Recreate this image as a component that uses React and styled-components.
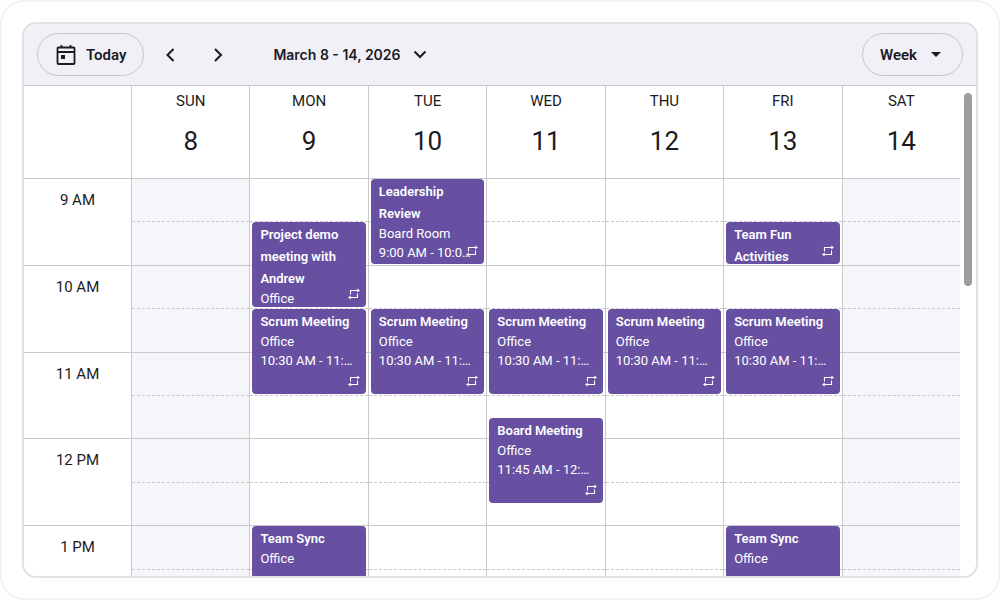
import styled, { createGlobalStyle } from "styled-components";

const days = [
    { name: "SUN", date: 8, off: true, events: [] },
    {
        name: "MON", date: 9, events: [
            { title: "Project demo meeting with Andrew", place: "Office", start: 3 },
            { title: "Scrum Meeting", place: "Office", time: "10:30 AM - 11:30 AM", start: 7 },
            { title: "Team Sync", place: "Office", start: 17 },
        ]
    },
    {
        name: "TUE", date: 10, events: [
            { title: "Leadership Review", place: "Board Room", time: "9:00 AM - 10:00 AM", start: 1 },
            { title: "Scrum Meeting", place: "Office", time: "10:30 AM - 11:30 AM", start: 7 },
        ]
    },
    {
        name: "WED", date: 11, events: [
            { title: "Scrum Meeting", place: "Office", time: "10:30 AM - 11:30 AM", start: 7 },
            { title: "Board Meeting", place: "Office", time: "11:45 AM - 12:45 PM", start: 12 },
        ]
    },
    {
        name: "THU", date: 12, events: [
            { title: "Scrum Meeting", place: "Office", time: "10:30 AM - 11:30 AM", start: 7 },
        ]
    },
    {
        name: "FRI", date: 13, events: [
            { title: "Team Fun Activities", start: 3, length: 2 },
            { title: "Scrum Meeting", place: "Office", time: "10:30 AM - 11:30 AM", start: 7 },
            { title: "Team Sync", place: "Office", start: 17 },
        ]
    },
    { name: "SAT", date: 14, off: true, events: [] },
];

const hours = ["9 AM", "10 AM", "11 AM", "12 PM", "1 PM"];

function RepeatIcon() {
    return (
        <Repeat viewBox="0 0 12 12" aria-hidden="true">
            <path d="M2.5 6.5V2.5H10M9.5 5.5V9.5H2" fill="none" stroke="currentColor" strokeWidth="1.1" />
            <path d="M9.2 0.6L12 2.5L9.2 4.4ZM2.8 7.6L0 9.5L2.8 11.4Z" fill="currentColor" />
        </Repeat>
    );
}

export default function App() {
    return (
        <Page>
            <GlobalStyle />
            <Calendar>
                <Toolbar>
                    <TodayButton type="button">
                        <svg width="20" height="22" viewBox="0 0 20 22" fill="none" stroke="currentColor" strokeWidth="1.8">
                            <rect x="1.5" y="3.5" width="17" height="16.5" rx="1" />
                            <path d="M1.5 8H18.5M5.5 1V4M14.5 1V4" />
                            <path d="M5 11H9V15H5Z" fill="currentColor" stroke="none" />
                        </svg>
                        Today
                    </TodayButton>
                    <ArrowButton type="button" aria-label="Previous week">
                        <svg width="16" height="16" viewBox="0 0 16 16"><path d="M10.5 2L4.5 8L10.5 14" /></svg>
                    </ArrowButton>
                    <ArrowButton type="button" aria-label="Next week">
                        <svg width="16" height="16" viewBox="0 0 16 16"><path d="M5 2L11 8L5 14" /></svg>
                    </ArrowButton>
                    <RangeButton type="button">
                        March 8 - 14, 2026
                        <svg width="14" height="16" viewBox="0 0 14 16"><path d="M1.5 4.5L7 10L12.5 4.5" /></svg>
                    </RangeButton>
                    <ViewPicker>
                        <select aria-label="View" defaultValue="Week">
                            <option>Day</option>
                            <option>Week</option>
                            <option>Month</option>
                        </select>
                        <svg width="10" height="5" viewBox="0 0 10 5" aria-hidden="true"><path d="M0 0H10L5 5Z" fill="currentColor" /></svg>
                    </ViewPicker>
                </Toolbar>
                <Main>
                    <Schedule>
                        <HeadCell />
                        {days.map((day) => (
                            <HeadCell key={day.name}>
                                <DayName>{day.name}</DayName>
                                <DayNumber>{day.date}</DayNumber>
                            </HeadCell>
                        ))}
                        <Column>
                            {hours.map((hour, i) => <Hour key={hour} $row={i * 4 + 1}>{hour}</Hour>)}
                        </Column>
                        {days.map((day) => (
                            <Column key={day.name}>
                                {hours.map((hour, i) => <Slot key={hour} $row={i * 4 + 1} $off={day.off} />)}
                                {hours.map((hour, i) => <Slot key={hour} $row={i * 4 + 3} $off={day.off} $half />)}
                                {day.events.map((event) => (
                                    <Event key={event.start} $start={event.start} $length={event.length || 4}>
                                        <Title>{event.title}</Title>
                                        {event.place && <Detail>{event.place}</Detail>}
                                        {event.time && <Detail>{event.time}</Detail>}
                                        <RepeatIcon />
                                    </Event>
                                ))}
                            </Column>
                        ))}
                    </Schedule>
                    <Track>
                        <Thumb />
                    </Track>
                </Main>
            </Calendar>
        </Page>
    );
}

const GlobalStyle = createGlobalStyle`
    * {
        box-sizing: border-box;
    }
    body {
        margin: 0;
        background-color: #ffffff;
        color: #1c1b1f;
        font-family: Roboto, sans-serif;
    }
    button, select {
        font-family: inherit;
        color: inherit;
        background: none;
        border: 0;
        padding: 0;
    }
`;
const Page = styled.div`
    height: 100vh;
    padding: 20px;
    border: 2px solid #f3f3f3;
    border-radius: 24px;
    display: flex;
`;
const Calendar = styled.div`
    flex: 1;
    min-width: 0;
    display: flex;
    flex-direction: column;
    overflow: hidden;
    border: 2px solid #dfe1e6;
    border-radius: 14px;
`;
const Toolbar = styled.div`
    display: flex;
    align-items: center;
    height: 62px;
    flex-shrink: 0;
    padding: 0 13px;
    background-color: #f1f0f7;
    border-bottom: 1px solid #c9c9cb;
`;
const TodayButton = styled.button`
    display: flex;
    align-items: center;
    gap: 10px;
    height: 43px;
    padding: 0 17px 0 18px;
    border: 1px solid #c6c5ca;
    border-radius: 22px;
    font-size: 15px;
    font-weight: 600;
`;
const ArrowButton = styled.button`
    display: flex;
    align-items: center;
    justify-content: center;
    width: 32px;
    height: 32px;
    margin-left: 11px;
    svg {
        fill: none;
        stroke: currentColor;
        stroke-width: 2;
    }
    & + & {
        margin-left: 15px;
    }
`;
const RangeButton = styled.button`
    display: flex;
    align-items: center;
    gap: 12px;
    height: 32px;
    margin-left: 39px;
    font-family: Inter, sans-serif;
    font-size: 14px;
    font-weight: 600;
    svg {
        fill: none;
        stroke: currentColor;
        stroke-width: 2;
    }
`;
const ViewPicker = styled.div`
    display: grid;
    align-items: center;
    width: 101px;
    height: 43px;
    margin-left: auto;
    border: 1px solid #c6c5ca;
    border-radius: 22px;
    select {
        grid-area: 1 / 1;
        width: 100%;
        height: 100%;
        padding-left: 17px;
        appearance: none;
        font-size: 15px;
        font-weight: 600;
    }
    svg {
        grid-area: 1 / 1;
        justify-self: end;
        margin-right: 21px;
        pointer-events: none;
    }
`;
const Main = styled.div`
    flex: 1;
    min-height: 0;
    display: flex;
    overflow: hidden;
`;
const Schedule = styled.div`
    flex: 1;
    display: grid;
    grid-template-columns: 107px repeat(7, 1fr);
    grid-template-rows: 92px 434px;
    align-content: start;
`;
const HeadCell = styled.div`
    display: flex;
    flex-direction: column;
    align-items: center;
    gap: 13px;
    padding-top: 4px;
    & + & {
        border-left: 1px solid #c9c9cb;
    }
`;
const DayName = styled.div`
    font-size: 15px;
    line-height: 22px;
`;
const DayNumber = styled.div`
    font-size: 26px;
    line-height: 32px;
`;
const Column = styled.div`
    min-width: 0;
    display: grid;
    grid-template-columns: minmax(0, 1fr);
    grid-template-rows: repeat(20, minmax(0, 1fr));
    & + & {
        border-left: 1px solid #c9c9cb;
    }
`;
const Hour = styled.div`
    grid-column: 1;
    grid-row: ${(props) => props.$row} / span 4;
    padding-top: 9px;
    border-top: 1px solid #c9c9cb;
    font-size: 15px;
    line-height: 24px;
    text-align: center;
`;
const Slot = styled.div`
    grid-column: 1;
    grid-row: ${(props) => props.$row} / span 2;
    border-top: 1px ${(props) => (props.$half ? "dashed" : "solid")} #c9c9cb;
    background-color: ${(props) => (props.$off ? "#f6f5fa" : "transparent")};
`;
const Event = styled.article`
    position: relative;
    grid-column: 1;
    grid-row: ${(props) => props.$start} / span ${(props) => props.$length};
    margin: 1px 2px;
    padding: 2px 8px;
    overflow: hidden;
    border-radius: 4px;
    background-color: #6750a2;
    color: #ffffff;
    font-size: 13px;
`;
const Title = styled.div`
    margin-bottom: -1px;
    font-weight: 600;
    line-height: 22px;
`;
const Detail = styled.div`
    overflow: hidden;
    white-space: nowrap;
    text-overflow: ellipsis;
    line-height: 19px;
`;
const Repeat = styled.svg`
    position: absolute;
    right: 6px;
    bottom: 7px;
    width: 12px;
    height: 12px;
`;
const Track = styled.div`
    width: 16px;
    padding: 7px 4px;
`;
const Thumb = styled.div`
    height: 193px;
    border-radius: 4px;
    background-color: #9e9e9e;
`;
